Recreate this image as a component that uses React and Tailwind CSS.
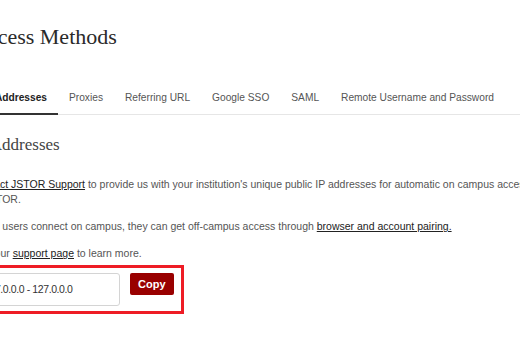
import React from 'react';

const tabs = ['IP Addresses', 'Proxies', 'Referring URL', 'Google SSO', 'SAML', 'Remote Username and Password'];

export default function App() {
  return (
    <div className="w-[520px] h-[347px] overflow-hidden bg-white">
      <div className="ml-[-28px] w-[620px] pt-[22px] text-[#555] [font-family:'Liberation_Sans',Arial,sans-serif]">
        <h1 className="text-[22px] leading-[30px] text-[#2a2a2a] [font-family:'Liberation_Serif',serif]">
          Access Methods
        </h1>

        {/* Tabs */}
        <div className="mt-[38px] flex w-[552px] border-b border-[#e6e6e6] text-[10.2px]">
          {tabs.map((t, i) => (
            <div
              key={t}
              className={
                i === 0
                  ? 'px-[11px] pb-[8px] font-bold text-[#222] border-b-2 border-[#333] -mb-px'
                  : 'px-[11px] pb-[8px] text-[#555]'
              }
            >
              {t}
            </div>
          ))}
        </div>

        <h2 className="mt-[19px] text-[17px] leading-[22px] text-[#444] [font-family:'Liberation_Serif',serif]">
          IP Addresses
        </h2>

        <div className="mt-[21px] w-[560px] text-[10.5px] leading-[15px]">
          <p>
            <a className="underline text-[#222]">Contact JSTOR Support</a> to provide us with your institution's unique public IP addresses for automatic on campus access to JSTOR.
          </p>
          <p className="mt-[12px]">
            When users connect on campus, they can get off-campus access through{' '}
            <a className="underline text-[#222]">browser and account pairing.</a>
          </p>
          <p className="mt-[12px]">
            Visit our <a className="underline text-[#222]">support page</a> to learn more.
          </p>
        </div>

        {/* highlighted copy row */}
        <div className="mt-[4px] -ml-[9px] inline-flex items-start gap-[10px] border-[3px] border-[#ee1c25] pl-[6px] pr-[7px] pt-[5px] pb-[5px]">
          <div className="w-[148px] h-[33px] flex items-center px-[11px] rounded-[3px] border border-[#d4d4d4] text-[10.5px] tracking-[-0.4px] text-[#333]">
            127.0.0.0 - 127.0.0.0
          </div>
          <button className="h-[22px] px-[8px] rounded-[2px] bg-[#990000] text-white text-[11px] font-bold">
            Copy
          </button>
        </div>
      </div>
    </div>
  );
}
